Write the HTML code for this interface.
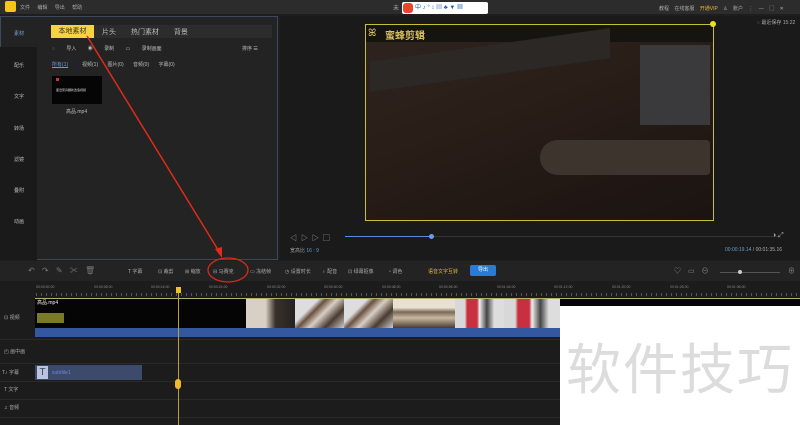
<!DOCTYPE html>
<html><head><meta charset="utf-8"><style>
*{margin:0;padding:0;box-sizing:border-box}
body{width:800px;height:425px;overflow:hidden;background:#1e1e1e;font-family:"Liberation Sans","Noto Sans CJK SC",sans-serif;color:#bbb;position:relative;font-size:5px}
.a{position:absolute}
.r{position:absolute;top:285px;font-size:3.5px;color:#888;white-space:nowrap}
.t{position:absolute;top:268px;font-size:5px;color:#aaa;white-space:nowrap}
.th{position:absolute;top:299px;height:29px}
</style></head><body>
<!-- title bar -->
<div class="a" style="left:0;top:0;width:800px;height:14px;background:#2c2c2c"></div>
<div class="a" style="left:5px;top:1px;width:11px;height:11px;background:#f5c518;border-radius:2px"></div>
<div class="a" style="left:20px;top:4px;color:#aaa;font-size:5px;word-spacing:6px">文件 编辑 导出 帮助</div>
<div class="a" style="left:393px;top:3px;color:#aaa;font-size:6px">未</div>
<div class="a" style="left:402px;top:2px;width:86px;height:12px;background:#fff;border-radius:2px;color:#1a5bb5;font-size:6px;padding-left:13px;line-height:12px">中 ♪ ° ↕ ▤ ♣ ▼ ▦</div>
<div class="a" style="left:403px;top:3px;width:10px;height:10px;background:#e8452c;border-radius:3px"></div>
<div class="a" style="left:659px;top:5px;color:#aaa;font-size:5px;word-spacing:4px">教程 在线客服 <span style="color:#e8b830">开通VIP</span> ♙ 账户 ⋮  —  ▢  ✕</div>
<!-- left sidebar -->
<div class="a" style="left:0;top:16px;width:37px;height:244px;background:#1a1a1a"></div>
<div class="a" style="left:0;top:16px;width:37px;height:31px;background:#232323;border-top:1px solid #3a4a5c;border-left:1px solid #3a4a5c"></div>
<div class="a" style="left:14px;top:30px;color:#7aa6d8">素材</div>
<div class="a" style="left:14px;top:62px">配乐</div>
<div class="a" style="left:14px;top:93px">文字</div>
<div class="a" style="left:14px;top:125px">转场</div>
<div class="a" style="left:14px;top:156px">滤镜</div>
<div class="a" style="left:14px;top:187px">叠附</div>
<div class="a" style="left:14px;top:218px">动画</div>
<!-- content panel -->
<div class="a" style="left:37px;top:16px;width:241px;height:244px;background:#232323;border:1px solid #3a4a5c;border-left:none"></div>
<div class="a" style="left:51px;top:25px;width:221px;height:13px;background:#2c2c2c"></div>
<div class="a" style="left:51px;top:25px;width:43px;height:13px;background:#f5d440;color:#333;font-size:7px;line-height:13px;text-align:center">本地素材</div>
<div class="a" style="left:102px;top:27px;font-size:7px;color:#bbb;word-spacing:13px">片头 热门素材 背景</div>
<div class="a" style="left:52px;top:45px;font-size:5px;word-spacing:10px">◌ 导入 ◉ 录制 ▭ 录制画面</div>
<div class="a" style="left:242px;top:45px;font-size:5px">排序 ☰</div>
<div class="a" style="left:52px;top:61px;font-size:5px;color:#6a9bd8;text-decoration:underline">所有(1)</div>
<div class="a" style="left:82px;top:61px;font-size:5px;word-spacing:8px">视频(1) 图片(0) 音频(0) 字幕(0)</div>
<div class="a" style="left:52px;top:76px;width:50px;height:28px;background:#050505"></div>
<div class="a" style="left:56px;top:78px;width:3px;height:3px;background:#c33"></div>
<div class="a" style="left:56px;top:88px;font-size:3px;color:#ddd">废旧家具翻新改造视频</div>
<div class="a" style="left:66px;top:108px;font-size:5px">高品.mp4</div>
<!-- preview -->
<div class="a" style="left:280px;top:16px;width:520px;height:244px;background:#1a1a1a"></div>
<div class="a" style="left:365px;top:24px;width:349px;height:197px;background:linear-gradient(160deg,#2e2420 0%,#2a1e18 40%,#221814 70%,#1a1412 100%)"></div>
<div class="a" style="left:365px;top:24px;width:349px;height:18px;background:#161410"></div>
<div class="a" style="left:370px;top:45px;width:240px;height:30px;background:#2c2826;transform:skewY(-8deg)"></div>
<div class="a" style="left:640px;top:45px;width:70px;height:80px;background:#3a3a3c"></div>
<div class="a" style="left:540px;top:140px;width:170px;height:35px;background:#3e342e;border-radius:20px 4px 4px 20px"></div>
<div class="a" style="left:365px;top:24px;width:349px;height:197px;border:1px solid #c8c030"></div>
<div class="a" style="left:710px;top:21px;width:6px;height:6px;background:#e8e020;border-radius:50%"></div>
<div class="a" style="left:385px;top:27px;font-size:10px;color:#d8c060;font-weight:bold">蜜蜂剪辑</div>
<div class="a" style="left:368px;top:28px;font-size:10px;color:#d8c060">ꕤ</div>
<div class="a" style="left:757px;top:19px;font-size:5px;color:#aaa">◌ 最近保存 15:22</div>
<div class="a" style="left:290px;top:233px;font-size:7px;color:#aaa;word-spacing:2px">◁ ▷ ▷ ▢</div>
<div class="a" style="left:345px;top:236px;width:435px;height:1px;background:#333"></div>
<div class="a" style="left:345px;top:236px;width:87px;height:1px;background:#5b8ed6"></div>
<div class="a" style="left:429px;top:234px;width:5px;height:5px;background:#6a9ee0;border-radius:50%"></div>
<div class="a" style="left:772px;top:232px;font-size:7px;color:#aaa">◑ ⤢</div>
<div class="a" style="left:290px;top:247px;font-size:5px;color:#999">宽高比 <span style="color:#6a9bd8">16 : 9</span></div>
<div class="a" style="left:725px;top:247px;font-size:5px;color:#aaa"><span style="color:#6a9bd8">00:00:19.14</span> / 00:01:35.16</div>
<!-- toolbar -->
<div class="a" style="left:0;top:261px;width:800px;height:20px;background:#232323"></div>
<div class="a" style="left:28px;top:265px;font-size:8px;color:#777;word-spacing:5px">↶ ↷ ✎ ✂ 🗑</div>
<div class="t" style="left:128px">T 字幕</div>
<div class="t" style="left:158px">⊡ 裁剪</div>
<div class="t" style="left:185px">⊞ 缩放</div>
<div class="t" style="left:213px">⊟ 马赛克</div>
<div class="t" style="left:250px">▭ 冻结帧</div>
<div class="t" style="left:285px">◷ 设置时长</div>
<div class="t" style="left:322px">♁ 配音</div>
<div class="t" style="left:348px">⊡ 绿幕抠像</div>
<div class="t" style="left:388px">◔ 调色</div>
<div class="a" style="left:428px;top:268px;font-size:5px;color:#e0b840">语音文字互转</div>
<div class="a" style="left:470px;top:265px;width:26px;height:11px;background:#2a7bd8;border-radius:2px;color:#fff;font-size:5px;text-align:center;line-height:11px">导出</div>
<div class="a" style="left:674px;top:266px;font-size:7px;color:#888;word-spacing:5px">♡ ▭ ⊖</div>
<div class="a" style="left:720px;top:272px;width:60px;height:1px;background:#555"></div>
<div class="a" style="left:738px;top:270px;width:4px;height:4px;background:#ccc;border-radius:50%"></div>
<div class="a" style="left:788px;top:266px;font-size:7px;color:#888">⊕</div>
<!-- ruler -->
<div class="a" style="left:0;top:281px;width:800px;height:16px;background:#1c1c1c"></div>
<div class="r" style="left:36px">00:00:00.00</div>
<div class="r" style="left:94px">00:00:08.00</div>
<div class="r" style="left:151px">00:00:16.00</div>
<div class="r" style="left:209px">00:00:24.00</div>
<div class="r" style="left:267px">00:00:32.00</div>
<div class="r" style="left:324px">00:00:40.00</div>
<div class="r" style="left:382px">00:00:48.00</div>
<div class="r" style="left:439px">00:00:56.00</div>
<div class="r" style="left:497px">00:01:04.00</div>
<div class="r" style="left:554px">00:01:12.00</div>
<div class="r" style="left:612px">00:01:20.00</div>
<div class="r" style="left:670px">00:01:28.00</div>
<div class="r" style="left:727px">00:01:36.00</div>
<div class="a" style="left:36px;top:293px;width:764px;height:3px;background:repeating-linear-gradient(90deg,#555 0 1px,transparent 1px 5px)"></div>
<!-- tracks -->
<div class="a" style="left:0;top:297px;width:800px;height:128px;background:#1c1c1c"></div>
<div class="a" style="left:0;top:339px;width:800px;height:1px;background:#2a2a2a"></div>
<div class="a" style="left:0;top:363px;width:800px;height:1px;background:#2a2a2a"></div>
<div class="a" style="left:0;top:381px;width:800px;height:1px;background:#2a2a2a"></div>
<div class="a" style="left:0;top:399px;width:800px;height:1px;background:#2a2a2a"></div>
<div class="a" style="left:0;top:417px;width:800px;height:1px;background:#2a2a2a"></div>
<div class="a" style="left:4px;top:314px;font-size:5px;color:#aaa">⊡ 视频</div>
<div class="a" style="left:4px;top:348px;font-size:5px;color:#aaa">◰ 画中画</div>
<div class="a" style="left:2px;top:369px;font-size:5px;color:#aaa">T♪ 字幕</div>
<div class="a" style="left:4px;top:386px;font-size:5px;color:#aaa">T 文字</div>
<div class="a" style="left:4px;top:404px;font-size:5px;color:#aaa">♫ 音频</div>
<div class="a" style="left:35px;top:298px;width:765px;height:30px;background:#050505;border-top:1px solid #b8b060"></div>
<div class="th" style="left:246px;width:49px;background:linear-gradient(90deg,#d8d0c4 0 40%,#3a302a 60%,#222 100%)"></div>
<div class="th" style="left:295px;width:49px;background:linear-gradient(135deg,#ddd 0 30%,#6a5040 40%,#d8cfc4 55%,#4a3a30 75%,#ccc 100%)"></div>
<div class="th" style="left:344px;width:49px;background:linear-gradient(135deg,#ddd 0 30%,#6a5040 40%,#d8cfc4 55%,#4a3a30 75%,#ccc 100%)"></div>
<div class="th" style="left:393px;width:62px;background:linear-gradient(180deg,#e8e0d0 0 30%,#7a6a58 45%,#c8b8a0 65%,#4a3a30 100%)"></div>
<div class="th" style="left:455px;width:49px;background:linear-gradient(90deg,#d8d8d8 0 20%,#c83040 25% 45%,#eee 50%,#444 65%,#ddd 80%)"></div>
<div class="th" style="left:504px;width:56px;background:linear-gradient(90deg,#d8d8d8 0 20%,#c83040 25% 45%,#eee 50%,#444 65%,#ddd 80%)"></div>
<div class="a" style="left:37px;top:299px;font-size:5px;color:#eee">高品.mp4</div>
<div class="a" style="left:37px;top:313px;width:27px;height:10px;background:#7a7a28"></div>
<div class="a" style="left:35px;top:328px;width:765px;height:9px;background:#3358a0"></div>
<div class="a" style="left:35px;top:365px;width:107px;height:15px;background:#3c4a6c"></div>
<div class="a" style="left:37px;top:366px;width:11px;height:13px;background:#b8c4e0;color:#445;font-size:10px;line-height:13px;text-align:center">T</div>
<div class="a" style="left:52px;top:370px;font-size:5px;color:#6a8bd8">subtitle1</div>
<div class="a" style="left:178px;top:288px;width:1px;height:137px;background:#b8a040"></div>
<div class="a" style="left:176px;top:287px;width:5px;height:6px;background:#f0c030"></div>
<div class="a" style="left:175px;top:379px;width:6px;height:10px;background:#f0b830;border-radius:3px"></div>
<!-- watermark -->
<div class="a" style="left:560px;top:306px;width:240px;height:119px;background:#fff"></div>
<div class="a" style="left:566px;top:330px;font-size:55px;color:#dcdcdc;font-family:'Noto Sans CJK SC',sans-serif;line-height:70px;letter-spacing:2px">软件技巧</div>
<!-- annotation -->
<svg class="a" style="left:0;top:0" width="800" height="425">
<line x1="87" y1="36" x2="220" y2="253" stroke="#e02a1a" stroke-width="1.5"/>
<polygon points="222,258 215,249 222,247" fill="#e02a1a"/>
<ellipse cx="228" cy="270" rx="20" ry="12" fill="none" stroke="#d82a1a" stroke-width="1.3"/>
</svg>
</body></html>
